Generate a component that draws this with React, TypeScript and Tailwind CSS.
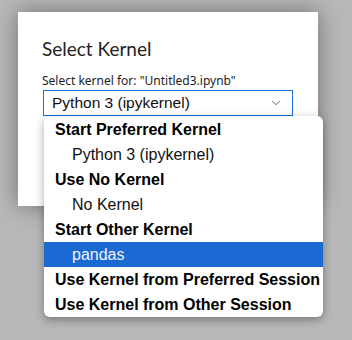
import { ChevronDown } from "lucide-react";

type Row = { label: string; header?: boolean; active?: boolean };

const rows: Row[] = [
    { label: "Start Preferred Kernel", header: true },
    { label: "Python 3 (ipykernel)" },
    { label: "Use No Kernel", header: true },
    { label: "No Kernel" },
    { label: "Start Other Kernel", header: true },
    { label: "pandas", active: true },
    { label: "Use Kernel from Preferred Session", header: true },
    { label: "Use Kernel from Other Session", header: true },
];

function KernelMenu() {
    return (
        <div className="absolute left-[1px] top-[26px] z-10 w-[279px] overflow-hidden rounded-[6px] bg-white pt-[1px] shadow-[0_3px_10px_rgba(0,0,0,0.35)]">
            {rows.map((row) => (
                <div
                    key={row.label}
                    className={
                        row.active
                            ? "flex h-[25px] items-center bg-[#1b69d3] pl-[28px] text-[16px] text-[#eef4ff]"
                            : row.header
                              ? "flex h-[25px] items-center pl-[11px] text-[16px] font-bold text-black"
                              : "flex h-[25px] items-center pl-[28px] text-[16px] text-[#111]"
                    }
                >
                    {row.label}
                </div>
            ))}
        </div>
    );
}

export default function App() {
    return (
        <main
            className="h-[340px] w-[352px] overflow-hidden bg-[#b8b8b8] pl-[18px] pt-[12px]"
            style={{ fontFamily: '"Liberation Sans", Arial, sans-serif' }}
        >
            <div className="h-[194px] w-[300px] bg-white pl-[24px] pt-[25px] shadow-[0_0_22px_rgba(0,0,0,0.4)]">
                <h1 className="text-[19px] leading-[24px] text-[#222]" style={{ fontFamily: 'Lato, "Noto Sans", sans-serif' }}>
                    Select Kernel
                </h1>
                <p className="mt-[12px] text-[12px] leading-[16px] text-[#222]" style={{ fontFamily: '"Noto Sans", sans-serif' }}>
                    Select kernel for: "Untitled3.ipynb"
                </p>
                <div className="relative ml-[1px] mt-[1px] w-[250px]">
                    <div className="flex h-[26px] items-center justify-between border border-[#1a6fd6] pl-[8px] pr-[9px] text-[15.5px] text-[#111]">
                        <span>Python 3 (ipykernel)</span>
                        <ChevronDown size={14} strokeWidth={1.5} className="text-[#555]" />
                    </div>
                    <KernelMenu />
                </div>
            </div>
        </main>
    );
}
